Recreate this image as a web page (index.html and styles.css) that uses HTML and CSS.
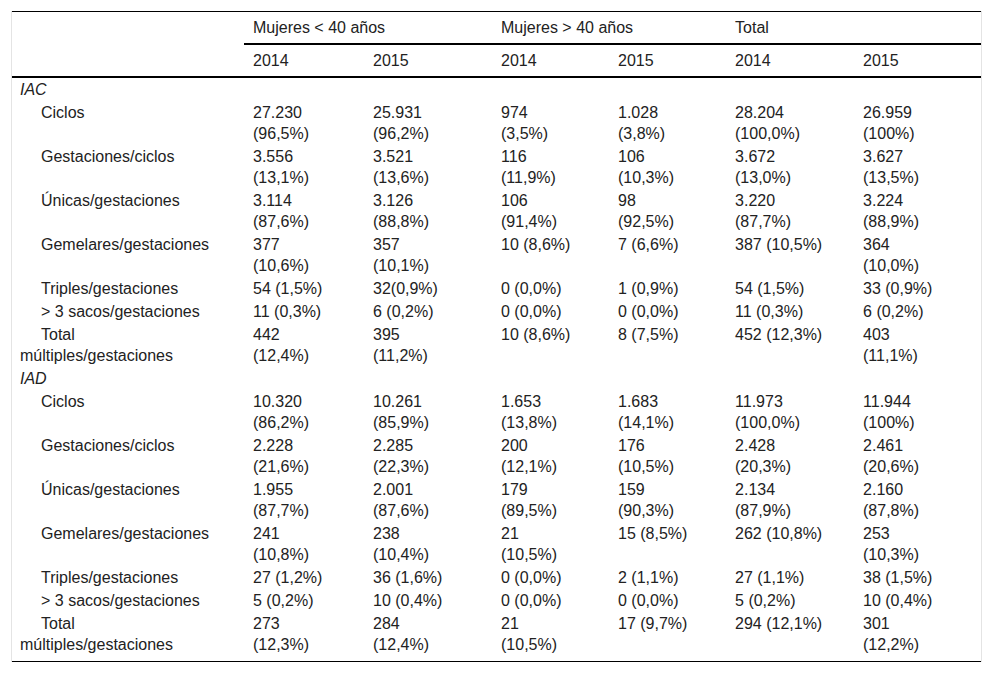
FILE: index.html
```html
<!DOCTYPE html>
<html lang="es">
<head>
<meta charset="utf-8">
<title>Tabla</title>
<link rel="stylesheet" href="styles.css">
</head>
<body>
<div class="wrap">
<table class="data">
  <colgroup>
    <col class="c-label">
    <col class="c-a">
    <col class="c-b">
    <col class="c-c">
    <col class="c-c">
    <col class="c-b">
    <col class="c-d">
  </colgroup>
  <thead>
    <tr class="grp">
      <th class="corner" rowspan="2"></th>
      <th colspan="2">Mujeres &lt; 40 años</th>
      <th colspan="2">Mujeres &gt; 40 años</th>
      <th colspan="2">Total</th>
    </tr>
    <tr class="yrs">
      <th>2014</th><th>2015</th><th>2014</th><th>2015</th><th>2014</th><th>2015</th>
    </tr>
  </thead>
  <tbody>
    <tr class="sec"><td colspan="7">IAC</td></tr>
    <tr><td class="lbl">Ciclos</td><td>27.230 (96,5%)</td><td>25.931 (96,2%)</td><td>974 (3,5%)</td><td>1.028 (3,8%)</td><td>28.204 (100,0%)</td><td>26.959 (100%)</td></tr>
    <tr><td class="lbl">Gestaciones/ciclos</td><td>3.556 (13,1%)</td><td>3.521 (13,6%)</td><td>116 (11,9%)</td><td>106 (10,3%)</td><td>3.672 (13,0%)</td><td>3.627 (13,5%)</td></tr>
    <tr><td class="lbl">Únicas/gestaciones</td><td>3.114 (87,6%)</td><td>3.126 (88,8%)</td><td>106 (91,4%)</td><td>98 (92,5%)</td><td>3.220 (87,7%)</td><td>3.224 (88,9%)</td></tr>
    <tr><td class="lbl">Gemelares/gestaciones</td><td>377 (10,6%)</td><td>357 (10,1%)</td><td>10 (8,6%)</td><td>7 (6,6%)</td><td>387 (10,5%)</td><td>364 (10,0%)</td></tr>
    <tr><td class="lbl">Triples/gestaciones</td><td>54 (1,5%)</td><td>32(0,9%)</td><td>0 (0,0%)</td><td>1 (0,9%)</td><td>54 (1,5%)</td><td>33 (0,9%)</td></tr>
    <tr><td class="lbl">&gt; 3 sacos/gestaciones</td><td>11 (0,3%)</td><td>6 (0,2%)</td><td>0 (0,0%)</td><td>0 (0,0%)</td><td>11 (0,3%)</td><td>6 (0,2%)</td></tr>
    <tr><td class="lbl">Total múltiples/gestaciones</td><td>442 (12,4%)</td><td>395 (11,2%)</td><td>10 (8,6%)</td><td>8 (7,5%)</td><td>452 (12,3%)</td><td>403 (11,1%)</td></tr>
    <tr class="sec"><td colspan="7">IAD</td></tr>
    <tr><td class="lbl">Ciclos</td><td>10.320 (86,2%)</td><td>10.261 (85,9%)</td><td>1.653 (13,8%)</td><td>1.683 (14,1%)</td><td>11.973 (100,0%)</td><td>11.944 (100%)</td></tr>
    <tr><td class="lbl">Gestaciones/ciclos</td><td>2.228 (21,6%)</td><td>2.285 (22,3%)</td><td>200 (12,1%)</td><td>176 (10,5%)</td><td>2.428 (20,3%)</td><td>2.461 (20,6%)</td></tr>
    <tr><td class="lbl">Únicas/gestaciones</td><td>1.955 (87,7%)</td><td>2.001 (87,6%)</td><td>179 (89,5%)</td><td>159 (90,3%)</td><td>2.134 (87,9%)</td><td>2.160 (87,8%)</td></tr>
    <tr><td class="lbl">Gemelares/gestaciones</td><td>241 (10,8%)</td><td>238 (10,4%)</td><td>21 (10,5%)</td><td>15 (8,5%)</td><td>262 (10,8%)</td><td>253 (10,3%)</td></tr>
    <tr><td class="lbl">Triples/gestaciones</td><td>27 (1,2%)</td><td>36 (1,6%)</td><td>0 (0,0%)</td><td>2 (1,1%)</td><td>27 (1,1%)</td><td>38 (1,5%)</td></tr>
    <tr><td class="lbl">&gt; 3 sacos/gestaciones</td><td>5 (0,2%)</td><td>10 (0,4%)</td><td>0 (0,0%)</td><td>0 (0,0%)</td><td>5 (0,2%)</td><td>10 (0,4%)</td></tr>
    <tr class="last"><td class="lbl">Total múltiples/gestaciones</td><td>273 (12,3%)</td><td>284 (12,4%)</td><td>21 (10,5%)</td><td>17 (9,7%)</td><td>294 (12,1%)</td><td>301 (12,2%)</td></tr>
  </tbody>
</table>
</div>
</body>
</html>
```

FILE: styles.css
```css
html, body {
  margin: 0;
  padding: 0;
  background: #fff;
}

.wrap {
  padding: 11px 0 0 11px;
}

.data {
  table-layout: fixed;
  width: 971px;
  border-collapse: separate;
  border-spacing: 0;
  border-left: 1px solid #e4e4e4;
  border-right: 1px solid #e4e4e4;
  font-family: "Liberation Sans", Arial, sans-serif;
  font-size: 16px;
  line-height: 21px;
  color: #222;
}

.c-label { width: 232px; }
.c-a { width: 120px; }
.c-b { width: 128px; }
.c-c { width: 117px; }
.c-d { width: 127px; }

.data th {
  font-weight: normal;
  text-align: left;
  padding: 0 10px 0 9px;
  vertical-align: top;
}

.grp th {
  border-top: 1px solid #000;
  border-bottom: 2px solid #000;
  padding-top: 5px;
  padding-bottom: 5px;
}

.grp th.corner {
  border-bottom: 2px solid #000;
}

.yrs th {
  border-bottom: 2px solid #000;
  padding-top: 5px;
  padding-bottom: 5px;
}

.data td {
  vertical-align: top;
  text-align: left;
  padding: 1px 34px 1px 9px;
}

.data td:nth-child(6) {
  padding-right: 20px;
}

.data td.lbl {
  padding-left: 8px;
  padding-right: 20px;
  text-indent: 21px;
}

.sec td {
  font-style: italic;
  padding-left: 8px;
}

.last td {
  padding-bottom: 6px;
  border-bottom: 1px solid #000;
}
```
